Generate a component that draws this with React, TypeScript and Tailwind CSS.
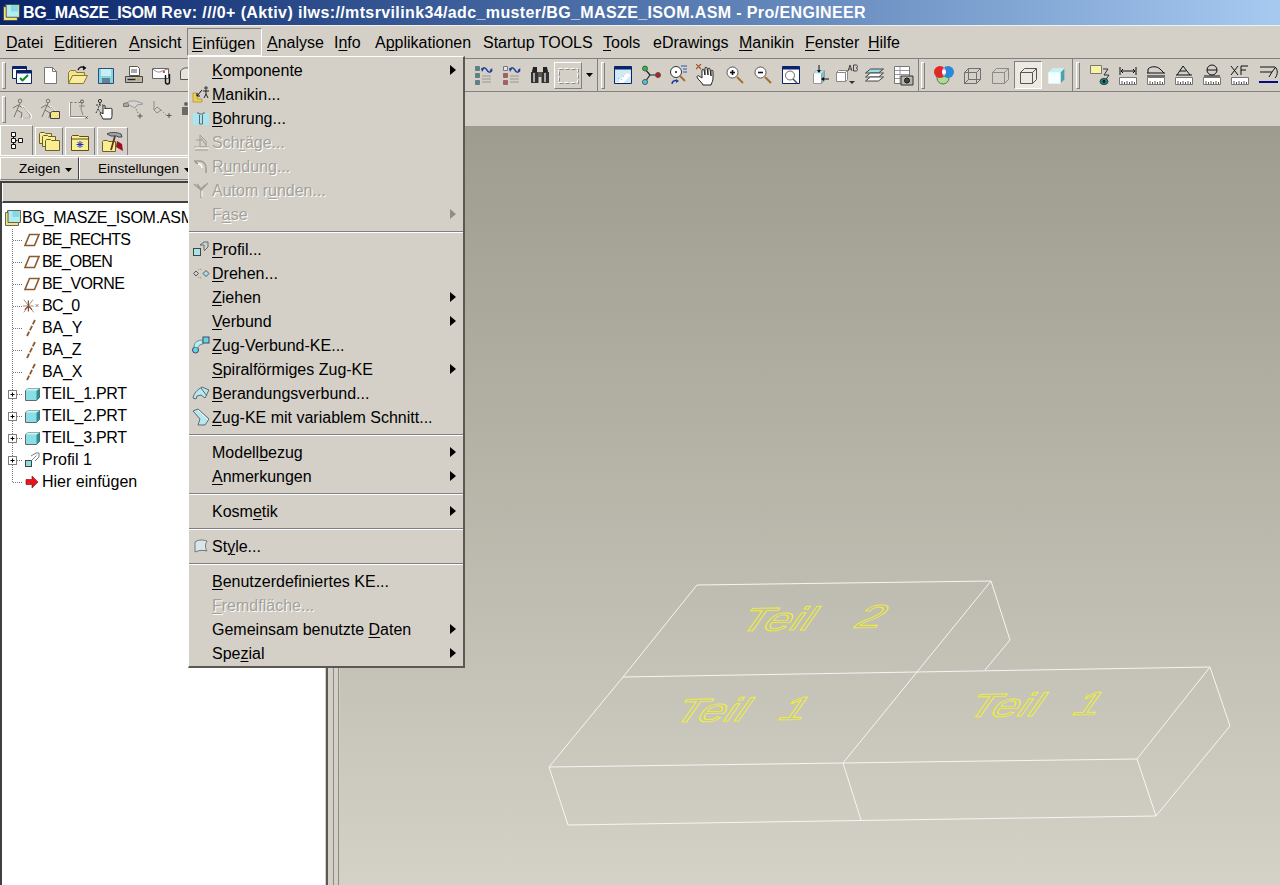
import React from "react";

const Ui = "font-['Liberation_Sans',sans-serif]";

function Mn({ t }: { t: string }) {
  const i = t.indexOf("&");
  if (i < 0) return <>{t}</>;
  return (
    <>
      {t.slice(0, i)}
      <span className="underline decoration-1 underline-offset-2">{t[i + 1]}</span>
      {t.slice(i + 2)}
    </>
  );
}

const S = ({ children, w = 22 }: { children: React.ReactNode; w?: number }) => (
  <svg width={w} height={22} viewBox={`0 0 ${w} 22`} fill="none" strokeLinejoin="round">
    {children}
  </svg>
);

/* ---------- toolbar icons ---------- */
const WinCheck = () => (
  <S>
    <rect x="1.500" y="2.500" width="14" height="12" fill="#fff" stroke="#0a246a" />
    <rect x="1.500" y="2.500" width="14" height="2.500" fill="#0a246a" />
    <rect x="5.500" y="6.500" width="15" height="13" fill="#fff" stroke="#0a246a" />
    <rect x="5.500" y="6.500" width="15" height="3" fill="#0a246a" />
    <path d="M9 14l2.500 2.500L17 11" stroke="#0a8a30" strokeWidth="2" />
  </S>
);
const NewPage = () => (
  <S>
    <path d="M5.500 3.500h8l4 4v12h-12z" fill="#fff" stroke="#777" />
    <path d="M13.500 3.500v4h4" stroke="#777" />
  </S>
);
const OpenFolder = () => (
  <S>
    <path d="M1.500 19.500v-11l2-2h5l1 2h8v3" fill="#f5e58a" stroke="#8a7a30" />
    <path d="M1.500 19.500l4-8h15l-4 8z" fill="#f8ec9e" stroke="#8a7a30" />
    <path d="M11 6c1-3 4-4 7-2" stroke="#111" strokeWidth="1.400" />
    <path d="M16 1.500l3.500 2.500-3.500 2.500z" fill="#111" />
  </S>
);
const Floppy = () => (
  <S>
    <rect x="3.500" y="4.500" width="15" height="15" fill="#7fd8e0" stroke="#2b4a80" />
    <rect x="6" y="5" width="10" height="7" fill="#c8f0f4" />
    <rect x="7" y="14" width="8" height="5" fill="#6a7c90" />
  </S>
);
const Printer = () => (
  <S>
    <path d="M6.500 2.500h8l2 2v7h-10z" fill="#fff" stroke="#555" />
    <path d="M8 6h6M8 8h6" stroke="#555" />
    <path d="M2.500 12.500h17v6h-17z" fill="#bdbab0" stroke="#444" />
    <path d="M4.500 15.500h8" stroke="#222" strokeWidth="1.400" />
    <rect x="14" y="14.500" width="3" height="2" fill="#caa83a" />
  </S>
);
const Mail = () => (
  <S>
    <path d="M1.500 4.500h16v10h-16z" fill="#fff" stroke="#666" />
    <path d="M2 5c3 3 6 4 9 2l6-2" stroke="#888" />
    <circle cx="13" cy="8" r="1" fill="#c02030" />
    <path d="M14.500 11v7a2 2 0 004 0v-8" stroke="#111" strokeWidth="1.400" />
  </S>
);
const Dome = () => (
  <S>
    <path d="M1.500 15.500V7c3-4 8-4 12-1v9.500z" fill="#e6e3dc" stroke="#555" />
  </S>
);
const Fig = ({ extra }: { extra?: React.ReactNode }) => (
  <S>
    <circle cx="9" cy="3" r="1.800" stroke="#77756e" />
    <path d="M9 5L6 12l-3 7M6 12l5 3-1 5M2 10l5-3 5 3" stroke="#77756e" />
    <path d="M11 8l9 9v3h-9" stroke="#fff" strokeWidth="1.500" />
    <path d="M12 9l7 8v3h-7" stroke="#9a988f" />
    {extra}
  </S>
);
const FigFolder = () => (
  <Fig extra={<path d="M11.500 20.500v-6l2-1h7v7z" fill="#f5e58a" stroke="#444" />} />
);
const DashBoxFig = () => (
  <S>
    <path d="M3.500 4.500v14h14" stroke="#8a8880" />
    <path d="M3.500 19.500h14M2.500 4.500v14" stroke="#fff" />
    <path d="M3.500 4.500h12" stroke="#777" strokeDasharray="2 2" />
    <circle cx="15" cy="3.500" r="1.500" stroke="#555" />
    <path d="M15 5l-1 6 2 6M12 8h6" stroke="#8a8880" />
    <path d="M18.500 18.500l2 2M20.500 18.500l-2 2" stroke="#444" />
  </S>
);
const Hand = ({ mark }: { mark?: boolean }) => (
  <S>
    <path
      d="M7 21c-1-3-5-5-6-8 0-1 1-2 2-1l3 2V6c0-1 2-1 2 0l1 5V4c0-1 2-1 2 0l1 7V5c0-1 2-1 2 0l1 7V7c0-1 2-1 2 0v7c0 3-1 4-2 7z"
      fill="#fff"
      stroke="#222"
    />
    {mark && <path d="M0 0l5 5M5 0L0 5" stroke="#a05530" strokeWidth="1.200" />}
  </S>
);
const FigHand = () => (
  <S>
    <circle cx="5" cy="3" r="1.600" stroke="#333" />
    <path d="M5 5L3 11l-2 4M3 11l3 4M1 7h7" stroke="#333" strokeDasharray="2 1" />
    <path
      d="M8 21c-1-2-2-4-3-5 0-1 1-1 2-1l1 1V8c0-1 2-1 2 0v3c0-1 2-1 2 0 0-1 2-1 2 0 0-1 3-1 3 0v5c0 2 0 3-1 5z"
      fill="#fff"
      stroke="#222"
    />
  </S>
);
const Pick = () => (
  <S>
    <path d="M0.500 5.500l5-1v4h-5z" fill="#aaa7a0" stroke="#777" />
    <path d="M5 4c4-2 10-1 15 2l-6 1-2 3-6-3" fill="#d8d5cf" stroke="#999" />
    <path d="M13 11l2 4" stroke="#777" strokeDasharray="1.500 1.500" />
    <path d="M17 15.500v5M14.500 18h5" stroke="#555" />
  </S>
);
const Sym = () => (
  <S>
    <path d="M3 3v9l3 3 4-3-4-3-3 3" stroke="#8d8b84" />
    <path d="M10 12l5 5" stroke="#8d8b84" strokeDasharray="1.500 1.500" />
    <path d="M18 15v5M15.500 17.500h5" stroke="#555" />
  </S>
);
const Blob = () => (
  <S>
    <circle cx="7" cy="6" r="2" fill="#666" />
    <path d="M3 9h7v8H3z" fill="#6a6a66" />
  </S>
);
const Swap = ({ red }: { red?: boolean }) => {
  const a = red ? "#d84a4a" : "#3b8f9a";
  return (
    <S>
      <rect x="2.500" y="2.500" width="4" height="4" fill={red ? "#e8e6e0" : "#3b8f9a"} stroke="#777" />
      <rect x="2.500" y="9.500" width="4" height="4" fill={a} stroke="#777" />
      <rect x="2.500" y="16.500" width="4" height="4" fill={a} stroke="#777" />
      <path d="M9 12h9M9 15h9M9 18h9" stroke="#9a9890" />
      <path d="M9 6c1-3 3-3 5 0M14 6c1 3 4 3 5 0" stroke="#1a3f9a" strokeWidth="1.500" />
      <path d="M8 4l3 1-2 3zM19.500 4l-1 4-2-2z" fill="#1a3f9a" />
    </S>
  );
};
const Binoc = () => (
  <S>
    <path d="M3 8l1-5h4v5zM14 8V3h4l1 5z" fill="#222" />
    <rect x="2" y="8" width="7.500" height="11" fill="#333" />
    <rect x="12.500" y="8" width="7.500" height="11" fill="#333" />
    <rect x="4" y="9" width="2" height="9" fill="#aaa" />
    <rect x="15" y="9" width="2" height="9" fill="#aaa" />
    <rect x="9" y="8" width="4" height="5" fill="#555" />
  </S>
);
const DashBox = () => (
  <S>
    <rect x="1.500" y="4.500" width="19" height="14" stroke="#fff" strokeDasharray="4 2" />
    <rect x="2.500" y="5.500" width="19" height="14" stroke="#8a8880" strokeDasharray="4 2" />
  </S>
);
const Sky = () => (
  <S>
    <rect x="2.500" y="2.500" width="17" height="17" fill="#cfeaf4" stroke="#0a246a" />
    <rect x="2.500" y="2.500" width="17" height="3" fill="#0a246a" />
    <path d="M3 19l12-10 4 2-8 8z" fill="#fff" />
    <path d="M6 18l1-2M9 16l1-2M11 13l1-1M6 15l1-1" stroke="#5fb8d8" strokeDasharray="1 1" />
  </S>
);
const Tree3 = () => (
  <S>
    <path d="M5 5l5 6M5 18l5-7M10 11h7" stroke="#222" strokeWidth="1.200" />
    <circle cx="5" cy="4.500" r="2.500" fill="#20c040" stroke="#555" />
    <circle cx="5" cy="18" r="2.500" fill="#40d0e0" stroke="#555" />
    <circle cx="18" cy="11" r="2.500" fill="#c01820" stroke="#555" />
  </S>
);
const Refit = () => (
  <S>
    <circle cx="8" cy="8" r="5.500" fill="#fff" stroke="#333" />
    <circle cx="8" cy="8" r="1" fill="#111" />
    <path d="M12 12l5 5" stroke="#a5702e" strokeWidth="2" />
    <path d="M13 2h6M15 5h4M15 8h4" stroke="#3355b0" />
    <path d="M4 20c0-3 3-4 5-3" stroke="#1a3f9a" strokeWidth="1.500" />
    <path d="M8 15l3 2-3 2z" fill="#1a3f9a" />
  </S>
);
const Zoom = ({ plus }: { plus?: boolean }) => (
  <S>
    <circle cx="8.500" cy="8.500" r="5.500" fill="#fff" stroke="#555" />
    <path d="M6 8.500h5" stroke="#111" strokeWidth="1.600" />
    {plus && <path d="M8.500 6v5" stroke="#111" strokeWidth="1.600" />}
    <path d="M13 13l6 6" stroke="#a5702e" strokeWidth="2" />
  </S>
);
const ZoomWin = () => (
  <S>
    <rect x="2.500" y="2.500" width="17" height="17" fill="#fff" stroke="#0a246a" />
    <rect x="2.500" y="2.500" width="17" height="3" fill="#0a246a" />
    <circle cx="10" cy="11.500" r="4.500" stroke="#666" />
    <path d="M13 15l4 4" stroke="#555" strokeWidth="1.600" />
  </S>
);
const CubeArrows = () => (
  <S>
    <path d="M5.500 9.500l3-3h8v10l-3 3h-8z" fill="#fff" stroke="#999" />
    <path d="M13.500 9.500l3-3v10l-3 3z" fill="#6cc8d4" stroke="#999" />
    <path d="M5.500 9.500l3-3h8l-3 3z" fill="#aee6ee" />
    <path d="M11 1v7" stroke="#111" />
    <path d="M9 6h4l-2 3z" fill="#111" />
    <path d="M14 15h7" stroke="#111" />
    <path d="M16 13v4l-3-2z" fill="#111" />
  </S>
);
const Ab = () => (
  <svg width="24" height="22" viewBox="0 0 24 22" fill="none">
    <path d="M1.500 8.500l2-2h9v9l-2 2h-9z" fill="#fff" stroke="#888" />
    <path d="M1.500 8.500h9v9M10.500 8.500l2-2" stroke="#888" />
    <path d="M13 7l2-6 2 6M14 5h2M18.500 1v6h2.500c2 0 2-3 0-3 2 0 2-3 0-3z" stroke="#444" />
    <path d="M14 17h6l-3 3z" fill="#333" />
  </svg>
);
const Layers = () => (
  <S>
    <path d="M1.500 9l5-4h13l-5 4z" fill="#9be0e8" stroke="#444" />
    <path d="M1.500 13l5-4h13l-5 4z" fill="#fff" stroke="#444" />
    <path d="M1.500 17l5-4h13l-5 4z" fill="#fff" stroke="#444" />
  </S>
);
const SheetCam = () => (
  <S>
    <rect x="2.500" y="2.500" width="15" height="17" fill="#fff" stroke="#777" />
    <path d="M3 6.500h14M3 10.500h14M3 14.500h14M8 3v16" stroke="#999" />
    <rect x="9" y="12" width="12" height="9" fill="#b8b5ac" stroke="#333" />
    <circle cx="15" cy="16.500" r="2.500" fill="#444" stroke="#111" />
  </S>
);
const Rgb = () => (
  <S>
    <circle cx="10" cy="14" r="6" fill="#a8e08a" stroke="#666" />
    <circle cx="7" cy="8" r="6" fill="#e02828" />
    <circle cx="15" cy="8" r="6" fill="#2a88d8" />
    <path d="M11 3.500a6 6 0 010 9 6 6 0 010-9z" fill="#f0b0e0" />
    <circle cx="11" cy="8" r="2" fill="#fff" />
  </S>
);
const Wire = ({ c, hidden }: { c: string; hidden?: boolean }) => (
  <S>
    <path d="M3.500 8.500l4-4h12v11l-4 4h-12z" stroke={c} />
    <path d="M3.500 8.500h12v11M15.500 8.500l4-4" stroke={c} />
    {hidden && <path d="M7.500 4.500v11h12M7.500 15.500l-4 4" stroke={c} />}
  </S>
);
const Solid = () => (
  <S>
    <path d="M3.500 8.500l4-4h12v11l-4 4h-12z" fill="#e8fbfd" />
    <path d="M3.500 8.500l4-4h12l-4 4z" fill="#c6f2f6" />
    <path d="M15.500 8.500l4-4v11l-4 4z" fill="#4fa0a8" />
    <path d="M3.500 8.500h12v11h-12z" fill="#f2feff" />
  </S>
);
const NoteEye = () => (
  <S>
    <rect x="1.500" y="1.500" width="11" height="8" fill="#f8f4a0" stroke="#777" />
    <path d="M14 5h5l-4 6h5l-4 6" stroke="#333" />
    <ellipse cx="15" cy="17.500" rx="4" ry="3" fill="#148a90" stroke="#333" />
    <circle cx="15" cy="17.500" r="1.400" fill="#111" />
  </S>
);
const Ruler = ({ children }: { children: React.ReactNode }) => (
  <S>
    {children}
    <rect x="2.500" y="13.500" width="17" height="7" fill="#fff" stroke="#777" />
    <path d="M5 17v3M7.500 18v2M10 17v3M12.500 18v2M15 17v3M17.500 18v2" stroke="#555" />
  </S>
);
const RulerA = () => (
  <Ruler>
    <path d="M3 3v8M19 3v8M4 7h14M4 7l2-2M4 7l2 2M18 7l-2-2M18 7l-2 2" stroke="#111" />
  </Ruler>
);
const RulerB = () => (
  <Ruler>
    <path d="M3 9V5c3-3 9-3 12 0l4 4M2 9h18M2 12h18" stroke="#111" />
  </Ruler>
);
const RulerC = () => (
  <Ruler>
    <path d="M3 11h16M4 11l6-9 7 9M7 7h6" stroke="#111" />
  </Ruler>
);
const RulerD = () => (
  <Ruler>
    <circle cx="11" cy="6" r="5" stroke="#111" />
    <path d="M6 6h10M3 12h16" stroke="#111" />
  </Ruler>
);
const RulerXf = () => (
  <Ruler>
    <path d="M2 2l7 9M9 2l-7 9M12 11V2h7M12 6h5" stroke="#111" />
  </Ruler>
);
const RulerLine = () => (
  <S>
    <path d="M3 3h15c3 2 3 8 0 11M3 8h12l3-4M12 13l3-5" stroke="#111" />
    <rect x="2" y="17" width="19" height="2" fill="#0a0a80" />
  </S>
);

/* ---------- tab / tree / menu icons ---------- */
const TabTree = () => (
  <S>
    <path d="M7.500 5.500v10M7.500 10.500h4" stroke="#111" />
    <rect x="5.500" y="2.500" width="4" height="4" fill="#fff" stroke="#111" />
    <rect x="5.500" y="8.500" width="4" height="4" fill="#fff" stroke="#111" />
    <rect x="5.500" y="14.500" width="4" height="4" fill="#fff" stroke="#111" />
    <rect x="12.500" y="8.500" width="4" height="4" fill="#fff" stroke="#111" />
  </S>
);
const Fld = ({ x, y, w = 14 }: { x: number; y: number; w?: number }) => (
  <path d={`M${x + 0.5} ${y + 11.5}v-10l1-1h4l1 1h${w - 6}v10z`} fill="#fbee90" stroke="#6a6030" />
);
const TabFolders = () => (
  <S>
    <Fld x={1} y={1} w={12} />
    <Fld x={4} y={4} w={13} />
    <Fld x={7} y={8} w={14} />
  </S>
);
const TabStar = () => (
  <S>
    <path d="M2.500 19.500v-14l1-1h6l1 1h9v14z" fill="#fbee90" stroke="#5a5020" />
    <path d="M2.500 8h17" stroke="#5a5020" />
    <path d="M11 10v7M7.500 13.500h7M8.500 11l5 5M13.500 11l-5 5" stroke="#1030d0" />
  </S>
);
const TabTools = () => (
  <S>
    <Fld x={0} y={9} w={13} />
    <path d="M5 3c3-2 10-2 14 0l1 3H16l-1-1H9z" fill="#9aa8b4" stroke="#444" />
    <path d="M13 5L9 19" stroke="#5a3a18" strokeWidth="1.800" />
    <path d="M15 10l5 3 1 7-7-4z" fill="#9a1020" />
  </S>
);
const Asm = ({ s = 16 }: { s?: number }) => (
  <svg width={s} height={s} viewBox="0 0 16 16" fill="none">
    <path d="M0.500 2.500h2v-2h13v12h-2v3h-13z" fill="#f3e47c" stroke="#444" strokeWidth=".8" />
    <path d="M3.500 1h11v11h-11z" fill="#84dae2" />
    <path d="M3.500 1h4v6h7v5h-11z" fill="#b2ecf0" />
    <path d="M3 1.500v11h10.500" stroke="#444" strokeWidth=".8" />
  </svg>
);
const Datum = () => (
  <svg width="16" height="16" viewBox="0 0 16 16" fill="none">
    <path d="M5.500 2.500h9.500l-4.500 11h-9.500z" stroke="#8a5a30" strokeWidth="1.600" />
  </svg>
);
const Csys = () => (
  <svg width="22" height="20" viewBox="0 0 22 20" fill="none">
    <path d="M1 10h12M2 3l11 14M12 3L2 17" stroke="#8a8880" />
    <path d="M7 4v12M3 14l4-4 4 4" stroke="#8a4a20" strokeWidth="1.300" />
    <path d="M15 8l3 3M18 8l-3 3" stroke="#777" />
  </svg>
);
const Axis = () => (
  <svg width="16" height="18" viewBox="0 0 16 18" fill="none">
    <path d="M11 1L3 17" stroke="#8a5a30" strokeWidth="1.800" strokeDasharray="5 1.500" />
  </svg>
);
const Part = () => (
  <svg width="16" height="16" viewBox="0 0 16 16" fill="none">
    <path d="M1.500 4.500l3-2h11v9l-3 3h-11z" fill="#8adfe6" stroke="#666" />
    <path d="M12.500 4.500l3-2v9l-3 3z" fill="#2f8f98" />
    <path d="M1.500 4.500l3-2h11l-3 2z" fill="#c8f4f6" />
  </svg>
);
const Sketch = () => (
  <svg width="16" height="16" viewBox="0 0 16 16" fill="none">
    <path d="M7 4l5-3 3 0v4l-4 4" stroke="#708088" />
    <rect x="1.500" y="8.500" width="6" height="6" fill="#8adfe6" stroke="#444" />
    <path d="M7.500 8.500l5-5" stroke="#888" />
  </svg>
);
const RedArrow = () => (
  <svg width="16" height="16" viewBox="0 0 16 16">
    <path d="M2 5.500h6V2l6 6-6 6v-3.500H2z" fill="#e8141e" stroke="#7a0a10" strokeWidth=".6" />
  </svg>
);

const MenuI = ({ children }: { children: React.ReactNode }) => (
  <svg width="18" height="18" viewBox="0 0 18 18" fill="none">
    {children}
  </svg>
);
const mIcons: Record<string, React.ReactNode> = {
  man: (
    <MenuI>
      <path d="M1 8h4v6h5v3H1z" fill="#f0d050" stroke="#9a8020" strokeWidth=".6" />
      <path d="M10 5l-5 6M5 8v3h3" stroke="#111" />
      <circle cx="14" cy="3" r="1.200" stroke="#222" />
      <path d="M14 5v4l-2 4M14 9l2 4M11 6h6" stroke="#222" />
    </MenuI>
  ),
  bore: (
    <MenuI>
      <rect x="1" y="4" width="16" height="12" fill="#a8e6f2" />
      <path d="M5 4h2v1h4V4h2M7.500 6v9h3V6" stroke="#666" />
    </MenuI>
  ),
  cham: (
    <MenuI>
      <path d="M2 14h15M3 17h13" stroke="#a09e96" />
      <path d="M8 2l6 6v6H8z" stroke="#a09e96" />
      <path d="M4 7h6M9 5l5 7" stroke="#a09e96" />
      <path d="M3 15h14" stroke="#fff" />
    </MenuI>
  ),
  round: (
    <MenuI>
      <path d="M2 4h6c3 0 6 3 6 7v5" stroke="#a09e96" strokeWidth="1.600" />
      <path d="M6 7c3 0 4 2 4 4" stroke="#fff" strokeWidth="1.500" />
      <path d="M3 5l3 2" stroke="#777" />
    </MenuI>
  ),
  auto: (
    <MenuI>
      <path d="M9 17V9l-7-6M9 9l7-7M5 3l4 5 4-4" stroke="#a09e96" strokeWidth="1.400" />
      <path d="M10 10v6" stroke="#fff" />
    </MenuI>
  ),
  prof: (
    <MenuI>
      <path d="M8 5l4-3h4v5l-4 4" stroke="#5d7078" />
      <path d="M8 5h4v5" stroke="#5d7078" />
      <rect x="1.500" y="8.500" width="7" height="7" fill="#a4e4ec" stroke="#444" />
    </MenuI>
  ),
  rev: (
    <MenuI>
      <path d="M1.500 9.500l2.500-2.500 2.500 2.500L4 12z" stroke="#555" />
      <path d="M11 9.500l3-3 3 3-3 3z" fill="#a4e4ec" stroke="#555" />
      <path d="M6 6c1-1 3-1 4 0M6 13c1 1 3 1 4 0" stroke="#888" strokeDasharray="1 1" />
    </MenuI>
  ),
  swb: (
    <MenuI>
      <circle cx="3.500" cy="14" r="3" fill="#60d8e4" stroke="#446" />
      <path d="M2 11c0-5 4-7 9-7v4c-3 0-5 2-5 4z" fill="#b8eef2" stroke="#6a8a90" />
      <rect x="11" y="1" width="6" height="6" fill="#60d8e4" stroke="#446" />
    </MenuI>
  ),
  blend: (
    <MenuI>
      <path d="M1 14c1-5 4-8 9-11l7 3c-2 3-2 5-4 8l-4-3-4 1-1 3z" fill="#b8e8ee" stroke="#5a6a70" />
      <path d="M9 4l6 8" stroke="#5a6a70" />
    </MenuI>
  ),
  vss: (
    <MenuI>
      <path d="M1 3l5-2 11 10-4 6H6l2-6z" fill="#b8e8ee" stroke="#5a6a70" />
      <path d="M6 2l10 10" stroke="#fff" />
    </MenuI>
  ),
  style: (
    <MenuI>
      <path d="M3 15V5c4-3 9-2 12-1-2 3-2 7 0 10-4-1-8-1-12 1z" fill="#dce6e8" stroke="#6a7a80" />
    </MenuI>
  ),
};

type Row =
  | { sep: true }
  | { t: string; i?: string; sub?: boolean; off?: boolean; sep?: false };
const menu: Row[] = [
  { t: "&Komponente", sub: true },
  { t: "&Manikin...", i: "man" },
  { t: "&Bohrung...", i: "bore" },
  { t: "Sch&räge...", i: "cham", off: true },
  { t: "R&undung...", i: "round", off: true },
  { t: "Autom r&unden...", i: "auto", off: true },
  { t: "F&ase", sub: true, off: true },
  { sep: true },
  { t: "&Profil...", i: "prof" },
  { t: "&Drehen...", i: "rev" },
  { t: "&Ziehen", sub: true },
  { t: "&Verbund", sub: true },
  { t: "&Zug-Verbund-KE...", i: "swb" },
  { t: "&Spiralförmiges Zug-KE", sub: true },
  { t: "&Berandungsverbund...", i: "blend" },
  { t: "&Zug-KE mit variablem Schnitt...", i: "vss" },
  { sep: true },
  { t: "Modell&bezug", sub: true },
  { t: "&Anmerkungen", sub: true },
  { sep: true },
  { t: "Kosm&etik", sub: true },
  { sep: true },
  { t: "St&yle...", i: "style" },
  { sep: true },
  { t: "&Benutzerdefiniertes KE..." },
  { t: "&Fremdfläche...", off: true },
  { t: "Gemeinsam benutzte &Daten", sub: true },
  { t: "Spe&zial", sub: true },
];

const menubar: [string, string][] = [
  ["&Datei", "w-[48px] pl-[5px]"],
  ["&Editieren", "w-[75px] pl-[5px]"],
  ["&Ansicht", "w-[63px] pl-[5px]"],
  ["&Einfügen", "w-[75px] pl-[4px] border border-t-[#808080] border-l-[#808080] border-r-white border-b-white"],
  ["&Analyse", "w-[67px] pl-[5px]"],
  ["I&nfo", "w-[41px] pl-[5px]"],
  ["A&pplikationen", "w-[108px] pl-[5px]"],
  ["Startup TOOLS", "w-[120px] pl-[5px]"],
  ["&Tools", "w-[50px] pl-[5px]"],
  ["eDrawin&gs", "w-[86px] pl-[5px]"],
  ["&Manikin", "w-[66px] pl-[5px]"],
  ["&Fenster", "w-[63px] pl-[5px]"],
  ["&Hilfe", "w-[60px] pl-[5px]"],
];

const Btn = ({ children, cls = "w-[28px]" }: { children: React.ReactNode; cls?: string }) => (
  <div className={`${cls} h-[32px] flex items-center justify-center shrink-0`}>{children}</div>
);
const Grip = () => (
  <div className="w-[4px] h-[27px] shrink-0 border border-t-white border-l-white border-r-[#808080] border-b-[#808080]" />
);
const GroupEnd = () => <div className="w-[2px] h-[32px] shrink-0 border-r border-r-[#808080]" />;

const tree: { t: string; ic: React.ReactNode; plus?: boolean; last?: boolean; c?: string }[] = [
  { t: "BE_RECHTS", ic: <Datum />, c: "tracking-[-0.9px]" },
  { t: "BE_OBEN", ic: <Datum />, c: "tracking-[-0.8px]" },
  { t: "BE_VORNE", ic: <Datum />, c: "tracking-[-0.6px]" },
  { t: "BC_0", ic: <Csys />, c: "tracking-[-0.6px]" },
  { t: "BA_Y", ic: <Axis />, c: "tracking-[-0.2px]" },
  { t: "BA_Z", ic: <Axis />, c: "tracking-[-0.2px]" },
  { t: "BA_X", ic: <Axis />, c: "tracking-[-0.2px]" },
  { t: "TEIL_1.PRT", ic: <Part />, plus: true, c: "tracking-[-0.3px]" },
  { t: "TEIL_2.PRT", ic: <Part />, plus: true, c: "tracking-[-0.3px]" },
  { t: "TEIL_3.PRT", ic: <Part />, plus: true, c: "tracking-[-0.3px]" },
  { t: "Profil 1", ic: <Sketch />, plus: true },
  { t: "Hier einfügen", ic: <RedArrow />, last: true },
];

const Conn = ({ plus, last }: { plus?: boolean; last?: boolean }) => (
  <svg width="20" height="22" viewBox="0 0 20 22" fill="none" className="shrink-0">
    <path d={last ? "M10.500 0v11" : "M10.500 0v22"} stroke="#777" strokeDasharray="1 1" />
    <path d="M11 11.500h9" stroke="#777" strokeDasharray="1 1" />
    {plus && (
      <>
        <rect x="6.500" y="7.500" width="8" height="8" fill="#fff" stroke="#808080" />
        <path d="M8.500 11.500h4M10.500 9.500v4" stroke="#000" />
      </>
    )}
  </svg>
);

const Arrow = ({ off }: { off?: boolean }) => (
  <svg width="6" height="10" viewBox="0 0 6 10">
    <path d="M0 0l6 5-6 5z" fill={off ? "#8f8d86" : "#000"} />
  </svg>
);

const edges = [
  "697,585 991,581 1010,640 985,670",
  "623,677 1210,667 1230,726 1156,816 1137,759 549,767 623,677 697,585",
  "991,581 843,763 861,820",
  "1210,667 1137,759",
  "1156,816 568,825 549,767",
];

const Label3D = ({ x, y, s }: { x: number; y: number; s: string }) => (
  <text
    transform={`matrix(1.45 -0.02 -0.7 1 ${x} ${y})`}
    fontFamily="'Liberation Sans',sans-serif"
    fontSize="33"
    fill="none"
    stroke="#f4f41c"
    strokeWidth="1"
    vectorEffect="non-scaling-stroke"
  >
    {s}
  </text>
);

export default function App() {
  return (
    <div className={`relative w-[1280px] h-[885px] overflow-hidden bg-[#d4d0c8] text-black ${Ui}`}>
      {/* title bar */}
      <div className="h-[25px] flex items-center bg-gradient-to-r from-[#0a246a] to-[#a6caf0] text-white">
        <div className="w-[23px] pl-[3px] flex">
          <Asm s={17} />
        </div>
        <span className="text-[16px] font-bold whitespace-nowrap tracking-[0.38px]">
          <span className="tracking-[-0.4px]">BG_MASZE_ISOM</span> Rev: ///0+ (Aktiv) ilws://mtsrvilink34/adc_muster/BG_MASZE_ISOM.ASM - Pro/ENGINEER
        </span>
      </div>
      <div className="h-px bg-[#f2f0ea]" />

      {/* menu bar */}
      <div className="h-[32px] flex pl-px pt-[2px] text-[16px]">
        {menubar.map(([t, c]) => (
          <div key={t} className={`${c} h-[28px] whitespace-nowrap leading-[29px]`}>
            <Mn t={t} />
          </div>
        ))}
      </div>

      {/* toolbar 1 */}
      <div className="h-[34px] flex items-center border-t border-t-[#808080] border-b border-b-[#808080] pl-[2px]">
        <Grip />
        <div className="w-[464px] shrink-0 flex pl-[2px]">
          {[<WinCheck />, <NewPage />, <OpenFolder />, <Floppy />, <Printer />, <Mail />, <Dome />].map((x, i) => (
            <Btn key={i}>{x}</Btn>
          ))}
        </div>
        <Btn><Swap /></Btn>
        <Btn><Swap red /></Btn>
        <Btn><Binoc /></Btn>
        <div className="w-[28px] h-[27px] shrink-0 flex items-center justify-center border border-t-white border-l-white border-r-[#808080] border-b-[#808080]">
          <DashBox />
        </div>
        <Btn cls="w-[14px]">
          <svg width="7" height="4" viewBox="0 0 7 4"><path d="M0 0h7L3.500 4z" fill="#000" /></svg>
        </Btn>
        <GroupEnd />
        <div className="w-[3px] shrink-0" />
        <Grip />
        <div className="w-[4px] shrink-0" />
        {[<Sky />, <Tree3 />, <Refit />, <Hand mark />, <Zoom plus />, <Zoom />, <ZoomWin />, <CubeArrows />, <Ab />, <Layers />, <SheetCam />].map((x, i) => (
          <Btn key={i}>{x}</Btn>
        ))}
        <GroupEnd />
        <div className="w-[2px] shrink-0" />
        <Grip />
        <div className="w-[5px] shrink-0" />
        <Btn><Rgb /></Btn>
        <Btn><Wire c="#707070" hidden /></Btn>
        <Btn><Wire c="#8a8a8a" /></Btn>
        <div className="w-[28px] h-[28px] shrink-0 flex items-center justify-center border border-t-[#808080] border-l-[#808080] border-r-white border-b-white bg-[#ece9e2]">
          <Wire c="#555" />
        </div>
        <Btn><Solid /></Btn>
        <div className="w-px shrink-0" />
        <GroupEnd />
        <div className="w-[3px] shrink-0" />
        <Grip />
        <div className="w-[6px] shrink-0" />
        <Btn><NoteEye /></Btn>
        <Btn><RulerA /></Btn>
        <Btn><RulerB /></Btn>
        <Btn><RulerC /></Btn>
        <Btn><RulerD /></Btn>
        <Btn><RulerXf /></Btn>
        <Btn><RulerLine /></Btn>
      </div>

      {/* toolbar 2 */}
      <div className="h-[34px] flex items-center pl-[2px]">
        <Grip />
        <div className="flex pl-[2px]">
          <Btn><Fig /></Btn>
          <Btn><FigFolder /></Btn>
          <Btn><DashBoxFig /></Btn>
          <Btn><FigHand /></Btn>
          <Btn><Pick /></Btn>
          <Btn><Sym /></Btn>
          <Btn><Blob /></Btn>
        </div>
      </div>

      {/* main */}
      <div className="h-[759px] flex">
        <div className="w-[326px] shrink-0 flex flex-col">
          <div className="h-[30px] flex items-end gap-[2px] border-b border-b-white">
            <div className="w-[33px] h-[30px] flex items-center justify-center border-t border-l border-r border-t-white border-l-white border-r-[#808080]">
              <TabTree />
            </div>
            <div className="w-[28px] h-[28px] flex items-center justify-center border-t border-l border-r border-t-white border-l-white border-r-[#808080]">
              <TabFolders />
            </div>
            <div className="w-[30px] h-[28px] flex items-center justify-center border-t border-l border-r border-t-white border-l-white border-r-[#808080]">
              <TabStar />
            </div>
            <div className="w-[31px] h-[28px] flex items-center justify-center border-t border-l border-r border-t-white border-l-white border-r-[#808080]">
              <TabTools />
            </div>
          </div>
          <div className="h-[25px] flex text-[13.500px] pt-px">
            <div className="w-[79px] h-[23px] flex items-center pl-[18px] pt-[2px] gap-[5px] border border-t-white border-l-white border-r-[#404040] border-b-[#808080]">
              Zeigen
              <svg width="7" height="4" viewBox="0 0 7 4"><path d="M0 0h7L3.500 4z" fill="#000" /></svg>
            </div>
            <div className="w-[246px] h-[23px] flex items-center pl-[18px] pt-[2px] gap-[5px] border border-t-white border-l-white border-r-[#404040] border-b-[#808080]">
              Einstellungen
              <svg width="7" height="4" viewBox="0 0 7 4"><path d="M0 0h7L3.500 4z" fill="#000" /></svg>
            </div>
          </div>
          <div className="flex-1 flex flex-col border-l-2 border-t-2 border-l-[#404040] border-t-[#404040] border-r border-r-[#d4d0c8]">
            <div className="h-[20px] border-l border-l-white bg-[#d4d0c8] border-b-2 border-b-[#404040]" />
            <div className="flex-1 bg-white text-[16px] pt-[4px]">
              <div className="h-[22px] flex items-center pl-[3px] gap-[1px] whitespace-nowrap tracking-[-0.25px]">
                <Asm />
                BG_MASZE_ISOM.ASM
              </div>
              {tree.map((r) => (
                <div key={r.t} className="h-[22px] flex items-center whitespace-nowrap">
                  <Conn plus={r.plus} last={r.last} />
                  <div className="w-[20px] shrink-0 flex justify-center">{r.ic}</div>
                  <span className={r.c}>{r.t}</span>
                </div>
              ))}
            </div>
          </div>
        </div>
        {/* sash */}
        <div className="w-[14px] shrink-0 flex">
          <div className="w-[2px] bg-[#5a5a54]" />
          <div className="w-[5px] bg-[#d4d0c8]" />
          <div className="w-px bg-[#8c8a82]" />
          <div className="w-[4px] bg-[#d4d0c8]" />
          <div className="w-px bg-[#8c8a82]" />
          <div className="w-px bg-[#d4d0c8]" />
        </div>
        {/* graphics */}
        <div className="flex-1 relative bg-gradient-to-b from-[#9e9c8e] to-[#d4d2c7]">
          <svg className="absolute inset-0" width="940" height="759" viewBox="340 126 940 759" fill="none">
            {edges.map((p) => (
              <polyline key={p} points={p} stroke="#f2f6f6" strokeWidth="1" />
            ))}
            <Label3D x={735.5} y={631} s="Teil" />
            <Label3D x={851} y={628} s="2" />
            <Label3D x={669.5} y={722} s="Teil" />
            <Label3D x={775} y={720} s="1" />
            <Label3D x={963} y={717} s="Teil" />
            <Label3D x={1069} y={715} s="1" />
          </svg>
        </div>
      </div>

      {/* open menu */}
      <div className="absolute left-[188px] top-[56px] w-[277px] h-[612px] bg-[#d4d0c8] border-t border-l border-t-white border-l-white border-r-2 border-b-2 border-r-[#5a5850] border-b-[#5a5850] pt-px text-[16px]">
        {menu.map((r, i) =>
          r.sep ? (
            <div key={i} className="h-[11px] flex flex-col justify-center">
              <div className="h-px bg-[#808080]" />
              <div className="h-px bg-white" />
            </div>
          ) : (
            <div key={i} className="h-[24px] flex items-center whitespace-nowrap relative">
              <div className="w-[23px] shrink-0 flex justify-center">{r.i && mIcons[r.i]}</div>
              <span className={r.off ? "pt-[2px] text-[#a3a199] [text-shadow:1px_1px_0_#fff]" : "pt-[2px]"}>
                <Mn t={r.t} />
              </span>
              {r.sub && (
                <div className="absolute right-[7px] top-[7px] flex">
                  <Arrow off={r.off} />
                </div>
              )}
            </div>
          )
        )}
      </div>
    </div>
  );
}
